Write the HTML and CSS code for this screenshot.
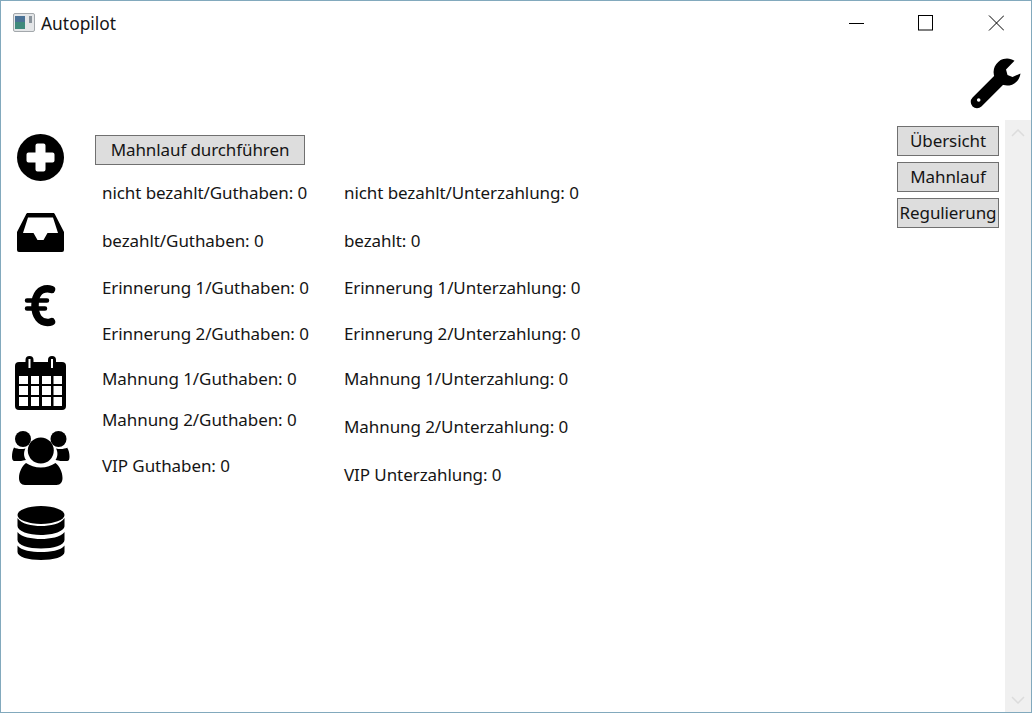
FILE: index.html
```html
<!DOCTYPE html>
<html lang="de">
<head>
<meta charset="utf-8">
<title>Autopilot</title>
<link rel="stylesheet" href="styles.css">
</head>
<body>
<div class="window">
  <header class="titlebar">
    <svg class="app-icon" viewBox="0 0 22 19"><rect x=".5" y=".5" width="21" height="18" rx="1.5" fill="#e4e6e8" stroke="#a3a8ac"/><rect x="2" y="3" width="10" height="13" fill="#3f8a7c"/><rect x="2" y="3" width="10" height="6" fill="#4a7296"/><rect x="16" y="3" width="3" height="7" fill="#8a949c"/></svg>
    <span class="app-title">Autopilot</span>
    <div class="controls">
      <svg class="control" viewBox="0 0 16 16"><path d="M1 8.500h15" stroke="#000" fill="none"/></svg>
      <svg class="control" viewBox="0 0 16 16"><rect x="1.500" y=".5" width="14" height="14.500" stroke="#000" fill="none"/></svg>
      <svg class="control" viewBox="0 0 16 16"><path d="M1 .5l15 15M16 .5l-15 15" stroke="#000" fill="none"/></svg>
    </div>
  </header>
  <div class="toolbar">
    <svg class="wrench" viewBox="970 58 52 52"><path d="M1014.500 60.800A13.500 13.500 0 1 0 1020.500 73.500L1012.500 77L1007.500 75L1006 69.500z"/><path d="M977 102L999 80" stroke="#000" stroke-width="12.500" stroke-linecap="round" fill="none"/><circle cx="978.700" cy="100" r="1.800" fill="#fff"/></svg>
  </div>
  <div class="body">
    <main class="content">
      <nav class="side-icons">
        <svg class="icon" viewBox="0 0 52 47"><circle cx="25.500" cy="23.500" r="23.500"/><path d="M22.500 9.500h6a2 2 0 0 1 2 2v7h7a2 2 0 0 1 2 2v6a2 2 0 0 1-2 2h-7v7a2 2 0 0 1-2 2h-6a2 2 0 0 1-2-2v-7h-7a2 2 0 0 1-2-2v-6a2 2 0 0 1 2-2h7v-7a2 2 0 0 1 2-2z" fill="#fff"/></svg>
        <svg class="icon" viewBox="0 0 52 40"><path d="M13 1h25c1 0 1.700.5 2 1.500L49 20v18a2 2 0 0 1-2 2H4a2 2 0 0 1-2-2V20l9-17.500C11.300 1.500 12 1 13 1z"/><path d="M13 5.500h25L43 21H32.500l-4 7h-6l-4-7H8z" fill="#fff"/></svg>
        <svg class="icon" viewBox="0 0 52 44"><path d="M36.500 5.500C35 5 34 4.800 32.500 4.800c-7 0-12.500 5.500-12.500 16.700S25.500 38.500 32.500 38.500c1.500 0 2.800-.3 4-.8" fill="none" stroke="#000" stroke-width="7.500" stroke-linecap="round"/><path d="M12 16.500h20M12 24.500h18" stroke="#000" stroke-width="4.500" stroke-linecap="round"/></svg>
        <svg class="icon" viewBox="0 0 52 54"><rect x="0" y="6" width="51" height="48" rx="4"/><rect x="10.500" y="0" width="8" height="14" rx="4"/><rect x="33" y="0" width="8" height="14" rx="4"/><g fill="#fff"><rect x="13.500" y="3" width="2" height="9"/><rect x="36" y="3" width="2" height="9"/><rect x="4" y="20" width="9" height="8"/><rect x="16" y="20" width="8" height="8"/><rect x="27" y="20" width="9" height="8"/><rect x="38.500" y="20" width="8.500" height="8"/><rect x="4" y="30" width="9" height="9"/><rect x="16" y="30" width="8" height="9"/><rect x="27" y="30" width="9" height="9"/><rect x="38.500" y="30" width="8.500" height="9"/><rect x="4" y="41" width="9" height="9"/><rect x="16" y="41" width="8" height="9"/><rect x="27" y="41" width="9" height="9"/><rect x="38.500" y="41" width="8.500" height="9"/></g></svg>
        <svg class="icon users" viewBox="0 0 60 54"><circle cx="12" cy="8" r="8"/><circle cx="47.500" cy="8" r="8"/><path d="M3 16.500c3 1.500 7 2 11.500 1-2 3.500-2 8 .5 11.500-2 .3-3.500.8-5 1H3.500C1.500 30 1 28 1 25.500c0-3 .7-6.500 2-9zM56.500 16.500c-3 1.500-7 2-11.500 1 2 3.500 2 8-.5 11.500 2 .3 3.500.8 5 1h6.500c2 0 2.500-2 2.500-4.500 0-3-.7-6.500-2.500-9z"/><circle cx="29.800" cy="19.500" r="13"/><path d="M15 32c4 2.500 9 4.500 14.800 4.500S40.500 34.500 44.500 32c4 3 7 9 7 15 0 4-2 7-6 7H14c-4 0-6-3-6-7 0-6 3-12 7-15z"/></svg>
        <svg class="icon" viewBox="0 0 52 54"><ellipse cx="26" cy="9" rx="23.500" ry="9"/><path d="M2.500 12C6 18 17 20 26 20s20-2 23.500-8v8c0 5-11 9-23.500 9S2.500 25 2.500 20z"/><path d="M2.500 26C6 31 17 33 26 33s20-2 23.500-7v8c0 5-11 8.500-23.500 8.500S2.500 39 2.500 34z"/><path d="M2.500 39.500C6 44.500 17 46 26 46s20-1.500 23.500-6.500V46c0 5-11 8-23.500 8S2.500 51 2.500 46z"/></svg>
      </nav>
      <section class="main-panel">
        <button class="btn btn-run" type="button">Mahnlauf durchführen</button>
        <div class="stats">
          <div class="stat-col stat-col-a">
            <p>nicht bezahlt/Guthaben: 0</p>
            <p>bezahlt/Guthaben: 0</p>
            <p>Erinnerung 1/Guthaben: 0</p>
            <p>Erinnerung 2/Guthaben: 0</p>
            <p>Mahnung 1/Guthaben: 0</p>
            <p>Mahnung 2/Guthaben: 0</p>
            <p>VIP Guthaben: 0</p>
          </div>
          <div class="stat-col stat-col-b">
            <p>nicht bezahlt/Unterzahlung: 0</p>
            <p>bezahlt: 0</p>
            <p>Erinnerung 1/Unterzahlung: 0</p>
            <p>Erinnerung 2/Unterzahlung: 0</p>
            <p>Mahnung 1/Unterzahlung: 0</p>
            <p>Mahnung 2/Unterzahlung: 0</p>
            <p>VIP Unterzahlung: 0</p>
          </div>
        </div>
      </section>
      <aside class="nav-buttons">
        <button class="btn" type="button">Übersicht</button>
        <button class="btn" type="button">Mahnlauf</button>
        <button class="btn" type="button">Regulierung</button>
      </aside>
    </main>
    <div class="scrollbar">
      <svg class="arrow" viewBox="0 0 14 8"><path d="M1 7l6-6 6 6" fill="none" stroke="#dcdcdc" stroke-width="1.500"/></svg>
      <svg class="arrow" viewBox="0 0 14 8"><path d="M1 1l6 6 6-6" fill="none" stroke="#dcdcdc" stroke-width="1.500"/></svg>
    </div>
  </div>
</div>
</body>
</html>
```
FILE: styles.css
```css
* { box-sizing: border-box; }
html, body { margin: 0; padding: 0; }
body { width: 1032px; height: 713px; overflow: hidden; background: #fff; font-family: "Noto Sans", "Open Sans", sans-serif; color: #151515; }
.window { width: 1032px; height: 713px; border: 1px solid #82a9bd; display: flex; flex-direction: column; background: #fff; }
.titlebar { height: 46px; display: flex; align-items: flex-start; padding: 12px 0 0 12px; flex: none; }
.app-icon { width: 22px; height: 19px; display: block; }
.app-title { font-size: 17.4px; line-height: 20px; margin-left: 6px; }
.controls { margin-left: auto; display: flex; gap: 53px; padding: 2px 27px 0 0; }
.control { width: 16px; height: 16px; display: block; }
.control:last-child { margin-left: 2px; }
.toolbar { height: 73px; flex: none; display: flex; justify-content: flex-end; padding: 11px 9px 0 0; }
.wrench { width: 52px; height: 52px; display: block; }
.body { flex: 1; display: flex; min-height: 0; }
.content { flex: 1; display: flex; min-width: 0; }
.side-icons { width: 94px; flex: none; display: flex; flex-direction: column; padding: 14px 0 0 14px; }
.icon { width: 52px; display: block; }
.icon:nth-child(1) { height: 47px; }
.icon:nth-child(2) { height: 40px; margin-top: 31px; }
.icon:nth-child(3) { height: 44px; margin-top: 32px; }
.icon:nth-child(4) { height: 54px; margin-top: 28px; }
.icon:nth-child(5) { height: 54px; margin-top: 21px; width: 60px; margin-left: -4px; }
.icon:nth-child(6) { height: 54px; margin-top: 21px; }
.main-panel { flex: 1; padding-top: 15px; min-width: 0; }
.btn { display: block; height: 30px; padding: 0; background: #dddddd; border: 1px solid #707070; border-radius: 0; font: inherit; font-size: 17px; line-height: 26px; letter-spacing: -0.1px; color: #151515; text-align: center; }
.btn-run { width: 210px; }
.stats { display: flex; padding: 16px 0 0 7px; }
.stat-col p { margin: 0; font-size: 17px; line-height: 24px; letter-spacing: -0.08px; white-space: nowrap; }
.stat-col-a { width: 242px; }
.stat-col-a p + p { margin-top: 24px; }
.stat-col-a p:nth-child(3) { margin-top: 23px; }
.stat-col-a p:nth-child(4) { margin-top: 22px; }
.stat-col-a p:nth-child(5) { margin-top: 21px; }
.stat-col-a p:nth-child(6) { margin-top: 17px; }
.stat-col-a p:nth-child(7) { margin-top: 22px; }
.stat-col-b p + p { margin-top: 24px; }
.stat-col-b p:nth-child(3) { margin-top: 23px; }
.stat-col-b p:nth-child(4) { margin-top: 22px; }
.stat-col-b p:nth-child(5) { margin-top: 21px; }
.nav-buttons { width: 102px; margin-right: 6px; flex: none; display: flex; flex-direction: column; gap: 6px; padding-top: 6px; }
.nav-buttons .btn { width: 102px; }
.scrollbar { width: 26px; flex: none; background: #f0f0f0; display: flex; flex-direction: column; justify-content: space-between; align-items: center; padding: 9px 0 8px; }
.arrow { width: 14px; height: 8px; display: block; }
```
